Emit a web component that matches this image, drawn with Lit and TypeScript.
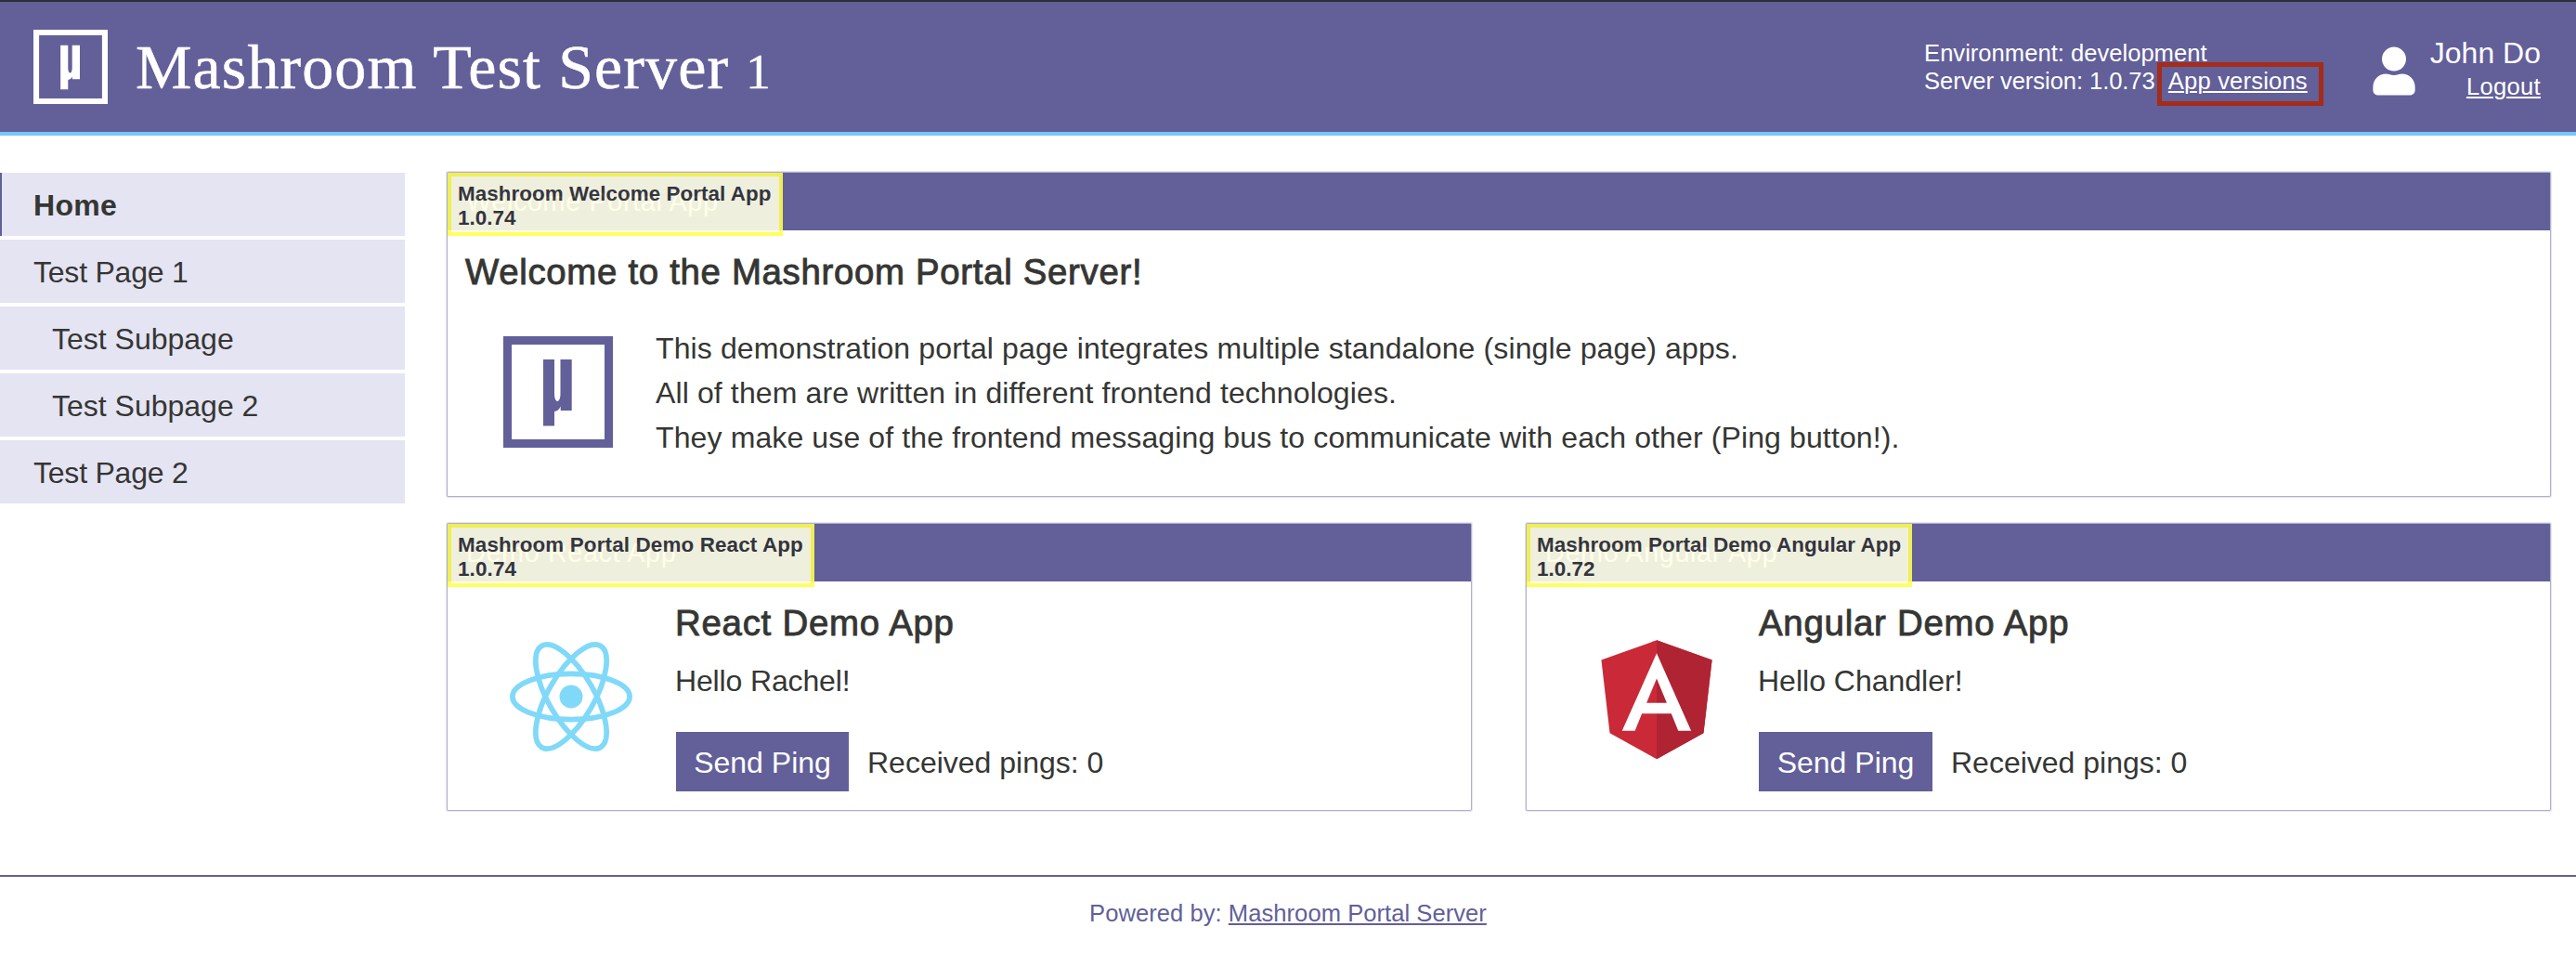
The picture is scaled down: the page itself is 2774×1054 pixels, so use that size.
import { LitElement, html, css, svg } from "lit";
import { customElement, property } from "lit/decorators.js";
import { classMap } from "lit/directives/class-map.js";

const logo = (cls: string) => html`
  <svg class=${cls} viewBox="0 0 118 120" preserveAspectRatio="none" fill="currentColor">
    <path fill-rule="evenodd" d="M0 0H118V120H0ZM9 9V111H109V9Z" />
    <path d="M43 25H55V62C55 72.5 61.5 72.5 61.5 62V25H73.7V80H61.7V75.5C60.2 79 58 80.8 55 81V96.5H43Z" />
  </svg>`;

const reactLogo = svg`
  <svg class="tech" viewBox="-13.94 -13.94 27.88 27.88" fill="none" stroke="#80d9f8">
    <circle r="2.18" fill="#80d9f8" stroke="none" />
    <ellipse rx="11" ry="4.3" />
    <ellipse rx="11" ry="4.3" transform="rotate(60)" />
    <ellipse rx="11" ry="4.3" transform="rotate(120)" />
  </svg>`;

const angularLogo = svg`
  <svg class="tech" viewBox="0 0 250 250">
    <path fill="#ca2a38" d="M125 30L31.9 63.2l14.2 123.1L125 230l78.9-43.7 14.2-123.1z" />
    <path fill="#b02333" d="M125 30v200l78.9-43.7 14.2-123.1z" />
    <path fill="#fff" d="M125 52.1L66.8 182.6h21.7l11.7-29.2h49.4l11.7 29.2H183L125 52.1zm17 83.3h-34l17-40.9 17 40.9z" />
  </svg>`;

const NAV = [
  { label: "Home", active: true },
  { label: "Test Page 1" },
  { label: "Test Subpage", sub: true },
  { label: "Test Subpage 2", sub: true },
  { label: "Test Page 2" },
];

/** Framed portal app with a title bar and a version badge laid over it. */
@customElement("portal-app")
export class PortalApp extends LitElement {
  @property() name = "";
  @property() appName = "";
  @property() version = "";

  static styles = css`
    :host {
      display: block;
      position: relative;
      border-radius: 1px;
      background: #fff;
      box-shadow: 0 0 0 1px #b1afcf, 0 0 0 2px #e6e5f0;
    }
    .bar {
      height: 62px;
      line-height: 62px;
      padding-left: 20px;
      background: #625f99;
      color: #fff;
      font-size: 28.8px;
      letter-spacing: 0.62px;
    }
    .badge {
      position: absolute;
      top: 0;
      left: 0;
      box-sizing: border-box;
      height: 68px;
      padding: 6px 8px 0 7px;
      border: 4px solid #ffff4e;
      background: #ffffe6;
      color: #2e3035;
      opacity: 0.9;
      font-size: 22.4px;
      font-weight: bold;
      line-height: 26px;
      letter-spacing: 0.06px;
      white-space: nowrap;
    }
    :host(.spaced) .badge { letter-spacing: 0.15px; }
  `;

  render() {
    return html`
      <div class="bar">${this.name}</div>
      <div class="badge"><div>${this.appName}</div><div>${this.version}</div></div>
      <slot></slot>
    `;
  }
}

@customElement("demo-app")
export class DemoApp extends LitElement {
  @property() kind: "react" | "angular" = "react";
  @property() person = "";

  static styles = css`
    :host { display: block; }
    .body { display: flex; height: 246px; box-sizing: border-box; }
    .react { padding-left: 53px; gap: 33px; }
    .angular { padding-left: 60px; gap: 30px; }
    .tech { flex: none; width: 160px; height: 160px; margin-top: 44px; }
    .react .tech { margin-top: 43.5px; }
    .info { padding-top: 21px; }
    .title {
      font-size: 38.4px;
      line-height: 48px;
      letter-spacing: 0.75px;
      -webkit-text-stroke: 0.9px currentColor;
    }
    .react .title { margin-left: -1px; }
    .hello { margin: 14px 0 31px -1px; line-height: 48px; }
    .react .hello { letter-spacing: -0.15px; }
    .actions { display: flex; gap: 20px; line-height: 62px; }
    .ping { width: 187px; padding-top: 2px; background: #625f99; color: #fff; text-align: center; }
    .react .ping { width: 186px; }
    .count { padding-top: 2px; }
  `;

  render() {
    return html`
      <div class="body ${this.kind}">
        ${this.kind === "react" ? reactLogo : angularLogo}
        <div class="info">
          <div class="title">${this.kind === "react" ? "React Demo App" : "Angular Demo App"}</div>
          <div class="hello">Hello ${this.person}!</div>
          <div class="actions">
            <div class="ping">Send Ping</div>
            <div class="count">Received pings: 0</div>
          </div>
        </div>
      </div>
    `;
  }
}

@customElement("app-root")
export class AppRoot extends LitElement {
  static styles = css`
    :host {
      display: block;
      height: 1054px;
      background: #fff;
      color: #353633;
      font-family: "Liberation Sans", Arial, sans-serif;
      font-size: 32px;
    }
    .header {
      display: flex;
      align-items: center;
      height: 140px;
      padding: 0 38px 0 36px;
      border-top: 2px solid #2c2f34;
      border-bottom: 4px solid #76c5fe;
      background: #625f99;
      color: #fff;
      white-space: nowrap;
    }
    .brand { width: 80px; height: 80px; }
    .site {
      flex: 1;
      margin-left: 30px;
      padding-bottom: 1px;
      font-family: "Liberation Serif", "Times New Roman", serif;
      font-size: 68px;
      line-height: 80px;
      letter-spacing: 1.1px;
      -webkit-text-stroke: 0.5px currentColor;
    }
    .one { font-size: 53px; line-height: 0; }
    .env { margin-right: 70px; font-size: 25.6px; line-height: 30px; }
    .server { letter-spacing: -0.08px; }
    .versions { position: relative; margin-left: 7px; letter-spacing: 0.17px; }
    .link { text-decoration: underline; text-decoration-thickness: 2px; text-underline-offset: 2px; }
    .mark {
      position: absolute;
      left: -12px;
      top: -6px;
      box-sizing: border-box;
      width: 179px;
      height: 47px;
      border: 5px solid #a62b18;
    }
    .avatar { width: 46px; height: 53px; margin: 9px 16px 0 0; }
    .user { padding-top: 6px; text-align: right; line-height: 36px; }
    .logout { font-size: 25.6px; letter-spacing: 0.3px; }
    .main { display: flex; gap: 46px; padding: 40px 28px 70px 0; }
    .nav { display: flex; flex-direction: column; gap: 4px; width: 436px; }
    .item {
      box-sizing: border-box;
      height: 68px;
      padding: 2px 0 0 36px;
      line-height: 66px;
      letter-spacing: -0.22px;
      background: #e5e4f3;
    }
    .sub { padding-left: 56px; letter-spacing: 0; }
    .active {
      padding-left: 34px;
      border-left: 2px solid #625f99;
      font-weight: bold;
      letter-spacing: 0.3px;
    }
    .content { flex: 1; display: grid; grid-template-columns: 1fr 1fr; gap: 30px 60px; }
    .wide { grid-column: 1 / -1; }
    .welcome { height: 286px; }
    .heading {
      padding: 21px 0 0 19px;
      font-size: 38.4px;
      line-height: 48px;
      letter-spacing: 0.68px;
      -webkit-text-stroke: 0.9px currentColor;
    }
    .intro { display: flex; gap: 46px; padding: 34px 0 0 60px; }
    .mu { width: 118px; height: 120px; margin-top: 11px; color: #625f99; }
    .lines { line-height: 48px; letter-spacing: 0.12px; }
    .footer {
      padding-top: 24px;
      border-top: 2px solid #625f99;
      color: #625f99;
      font-size: 25.6px;
      line-height: 30px;
      letter-spacing: 0.03px;
      text-align: center;
    }
  `;

  render() {
    return html`
      <div class="header">
        ${logo("brand")}
        <div class="site">Mashroom Test Server <span class="one">1</span></div>
        <div class="env">
          <div>Environment: development</div>
          <div>
            <span class="server">Server version: 1.0.73</span>
            <span class="versions"><span class="link">App versions</span><span class="mark"></span></span>
          </div>
        </div>
        <svg class="avatar" viewBox="0 0 46 53" fill="#fff">
          <circle cx="23" cy="13.6" r="13" />
          <path d="M0.4 47V44C0.4 35 7 29.5 14 29.5C18 29.5 19.5 31 23 31C26.500 31 28 29.500 32 29.500C39 29.500 45.700 35 45.700 44V47C45.700 50 43.500 52.500 40 52.500H6C2.600 52.500 .4 50 .4 47Z" />
        </svg>
        <div class="user">
          <div>John Do</div>
          <div class="logout"><span class="link">Logout</span></div>
        </div>
      </div>
      <div class="main">
        <div class="nav">
          ${NAV.map(
            (n) => html`<div class=${classMap({ item: true, sub: !!n.sub, active: !!n.active })}>${n.label}</div>`
          )}
        </div>
        <div class="content">
          <portal-app class="wide" name="Welcome Portal App" .appName=${"Mashroom Welcome Portal App"} version="1.0.74">
            <div class="welcome">
              <div class="heading">Welcome to the Mashroom Portal Server!</div>
              <div class="intro">
                ${logo("mu")}
                <div class="lines">
                  <div>This demonstration portal page integrates multiple standalone (single page) apps.</div>
                  <div>All of them are written in different frontend technologies.</div>
                  <div>They make use of the frontend messaging bus to communicate with each other (Ping button!).</div>
                </div>
              </div>
            </div>
          </portal-app>
          <portal-app class="spaced" name="Demo React App" .appName=${"Mashroom Portal Demo React App"} version="1.0.74">
            <demo-app kind="react" person="Rachel"></demo-app>
          </portal-app>
          <portal-app name="Demo Angular App" .appName=${"Mashroom Portal Demo Angular App"} version="1.0.72">
            <demo-app kind="angular" person="Chandler"></demo-app>
          </portal-app>
        </div>
      </div>
      <div class="footer">Powered by: <span class="link">Mashroom Portal Server</span></div>
    `;
  }
}
